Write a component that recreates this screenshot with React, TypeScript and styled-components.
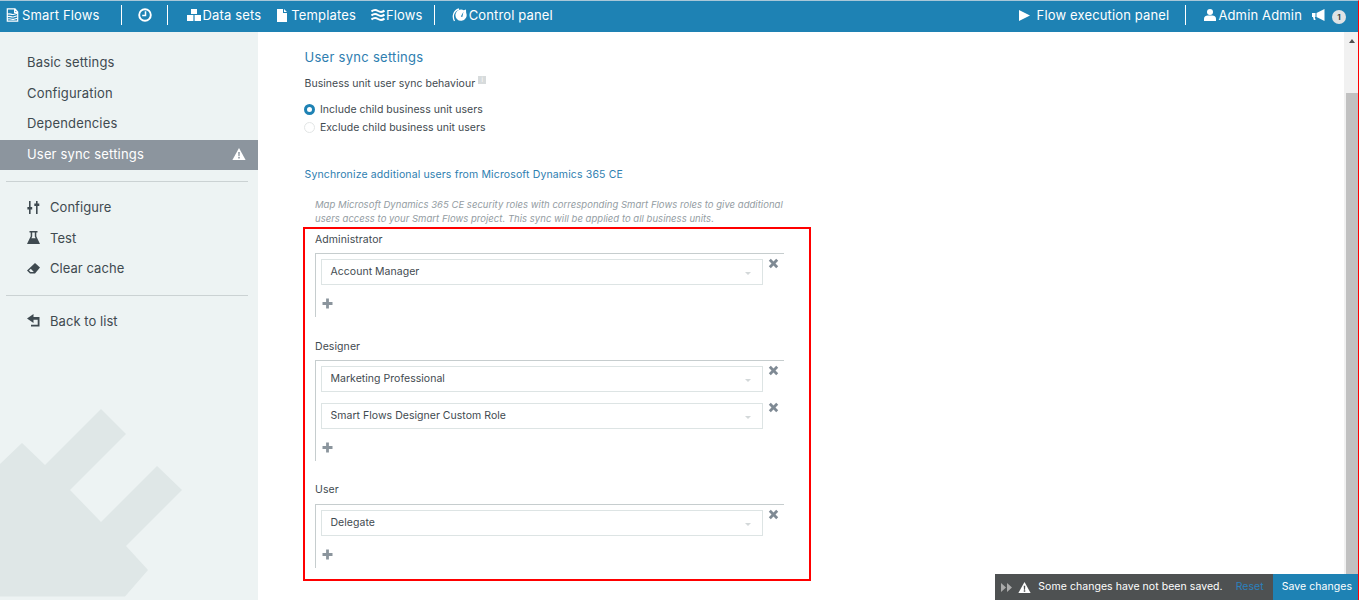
import React from 'react';
import styled, { createGlobalStyle } from 'styled-components';

const Global = createGlobalStyle`
  html, body { margin: 0; padding: 0; height: 100%; overflow: hidden; background: #fff; }
  body { font-family: Inter, "Liberation Sans", sans-serif; }
  #root { height: 100%; }
`;

const Page = styled.div`
  width: 1359px; height: 600px; display: flex; flex-direction: column; position: relative;
  border-right: 1px solid #f00; border-top: 1px solid #a9c7d8; box-sizing: border-box; overflow: hidden;
`;
const TopBar = styled.header`
  height: 31px; flex: none; background: #1e82b4; color: #fff; display: flex; align-items: center;
  font-size: 13px; letter-spacing: .15px; padding-bottom: 3px; box-sizing: border-box; white-space: nowrap;
`;
const NavItem = styled.span<{ $left: number; $gap?: number }>`
  display: inline-flex; align-items: center; gap: ${p => p.$gap ?? 2}px; margin-left: ${p => p.$left}px;
  svg { display: block; flex: none; }
`;
const Sep = styled.i<{ $left: number }>`
  display: block; width: 1px; height: 20px; background: #fff; margin-left: ${p => p.$left}px;
`;
const Spacer = styled.div` flex: 1; `;
const Badge = styled.b`
  width: 14px; height: 14px; border-radius: 50%; background: #dfe3e5; color: #444; font-size: 8px; font-weight: 700;
  display: flex; align-items: center; justify-content: center; margin: 4px 12px 0 7px;
`;
const Body = styled.div` flex: 1; display: flex; min-height: 0; `;
const Side = styled.aside`
  width: 258px; flex: none; background: #edf3f3; position: relative; overflow: hidden; padding-top: 15px; box-sizing: border-box;
`;
const SideLink = styled.div<{ $active?: boolean; $h?: number; $pb?: number }>`
  height: ${p => p.$h ?? 31}px; display: flex; align-items: center; padding: 0 12px ${p => p.$pb ?? 0}px 27px; font-size: 13px; letter-spacing: .17px;
  box-sizing: border-box; position: relative;
  color: ${p => (p.$active ? '#fff' : '#3f4a50')}; background: ${p => (p.$active ? '#8c959e' : 'transparent')};
  justify-content: space-between;
`;
const SideAction = styled.div`
  height: 30.5px; display: flex; align-items: center; gap: 10px; padding-left: 27px; font-size: 13px; letter-spacing: .05px; color: #3f4a50; position: relative;
  svg { width: 13px; height: 13px; flex: none; }
`;
const Rule = styled.hr<{ $top: number; $bottom: number }>`
  border: 0; height: 1px; background: #cbd2d3; margin: ${p => p.$top}px 10px ${p => p.$bottom}px 6px;
`;
const PlugArt = styled.svg`
  position: absolute; left: 0; bottom: 0; width: 258px; height: 210px;
`;
const Main = styled.main`
  flex: 1; position: relative; background: #fff; min-width: 0; display: flex;
`;
const Content = styled.div`
  flex: 1; padding: 17px 0 0 46px; color: #3f4a50; box-sizing: border-box; min-width: 0;
`;
const Title = styled.h2`
  margin: 0; font-size: 13px; line-height: 16px; font-weight: 400; letter-spacing: .28px; color: #2e7eb0; padding-left: .5px;
`;
const Label = styled.div`
  font-size: 10.5px; line-height: 14px; margin-top: 12px; color: #3f4a50; letter-spacing: .03px; display: flex; padding-left: .5px;
`;
const Info = styled.span`
  width: 8px; height: 8px; background: #d7dbdc; color: #fff; font-size: 6px; line-height: 8px; text-align: center; margin: -1px 0 0 3px;
`;
const Radios = styled.div` margin-top: 11px; display: flex; flex-direction: column; gap: 4px; `;
const RadioRow = styled.label`
  display: flex; align-items: center; gap: 5px; height: 14px; font-size: 10.5px; letter-spacing: .03px; color: #3f4a50;
`;
const RadioDot = styled.span<{ $on?: boolean }>`
  width: 11px; height: 11px; border-radius: 50%; box-sizing: border-box; background: #fff;
  border: ${p => (p.$on ? '3px solid #1e82b4' : '1px solid #e3e6e6')};
`;
const SubTitle = styled.h3`
  margin: 34px 0 0; font-size: 10.5px; line-height: 14px; font-weight: 400; color: #2e7eb0; letter-spacing: .14px; padding-left: .5px;
`;
const Mapping = styled.div` width: 480px; margin: 16px 0 0 11px; `;
const Help = styled.p`
  margin: 0; font-size: 9.5px; line-height: 14px; font-style: italic; color: #939ca2; letter-spacing: .03px; white-space: nowrap;
`;
const Group = styled.section<{ $top: number }>` margin-top: ${p => p.$top}px; `;
const GroupLabel = styled.div<{ $mb: number }>` font-size: 10.5px; line-height: 14px; color: #3f4a50; margin-bottom: ${p => p.$mb}px; letter-spacing: .08px; `;
const GroupBox = styled.div`
  width: 469px; border-top: 1px solid #c6cdce; border-left: 1px solid #c6cdce; padding: 5px 0 0 5px; box-sizing: border-box;
`;
const SelectRow = styled.div` display: flex; height: 26px; margin-bottom: 11px; `;
const SelectBox = styled.div`
  width: 442px; height: 26px; box-sizing: border-box; border: 1px solid #dde4e4; display: flex; align-items: center;
  justify-content: space-between; padding: 0 11px 2px 8.5px; font-size: 10.5px; letter-spacing: .03px; color: #3f4a50;
`;
const Caret = styled.i`
  width: 0; height: 0; border-left: 3px solid transparent; border-right: 3px solid transparent; border-top: 3px solid #d3d8d9; margin-top: 4px;
`;
const IconBtn = styled.span`
  display: block; margin: -1px 0 0 5px; svg { display: block; }
`;
const AddRow = styled.div` height: 21px; padding: 2px 0 0 1px; box-sizing: border-box; svg { display: block; } `;
const Scroll = styled.div`
  width: 14px; flex: none; background: #f1f1f1; position: relative;
`;
const Thumb = styled.div`
  position: absolute; left: 2px; right: 0; top: 61px; bottom: 0; background: #c1c1c1;
`;
const ScrollUp = styled.i`
  position: absolute; left: 5px; top: 7px; width: 0; height: 0; border-left: 3.5px solid transparent; border-right: 3.5px solid transparent; border-bottom: 4px solid #505050;
`;
const SaveBar = styled.div`
  position: absolute; right: 0; bottom: 0; height: 26px; display: flex; align-items: center; background: #4e5152; color: #fff; font-size: 10.5px; letter-spacing: .05px;
`;
const SaveMsg = styled.span`
  display: inline-flex; align-items: center; padding-left: 6px; white-space: nowrap; svg { display: block; flex: none; }
`;
const Skip = styled.svg` margin-right: 6px; `;
const SaveText = styled.span` margin: 0 0 2px 7px; `;
const ResetLink = styled.span` color: #2b80bd; margin: 0 9px 2px 13px; `;
const SaveBtn = styled.span` height: 26px; padding: 0 6px 2px 9px; box-sizing: border-box; background: #1e82b4; display: flex; align-items: center; `;
const RedFrame = styled.div`
  position: absolute; left: 303px; top: 226px; width: 508px; height: 354px; box-sizing: border-box; border: 2px solid #f00; pointer-events: none;
`;

const X = () => (
  <svg width="11" height="11" viewBox="0 0 11 11"><path d="M2.800.8L5.500 3.500 8.200.8 10.200 2.800 7.500 5.500 10.200 8.200 8.200 10.200 5.500 7.500 2.800 10.200.8 8.200 3.500 5.500.8 2.800z" fill="#7f8a94"/></svg>
);
const Plus = () => (
  <svg width="11" height="11" viewBox="0 0 11 11"><path d="M4.100 .5h2.800v3.600h3.600v2.800H6.900v3.600H4.100V6.900H.5V4.100h3.600z" fill="#8b959d"/></svg>
);
const Warn = ({ s = 14, inner = '#8c959e' }: { s?: number; inner?: string }) => (
  <svg width={s} height={s} viewBox="0 0 14 14"><path d="M7 1l6.600 12H.4z" fill="#fff"/><path d="M6.200 5h1.600l-.2 4.300H6.400zM6.200 10h1.600v1.600H6.200z" fill={inner}/></svg>
);

const roles = [
  { name: 'Administrator', items: ['Account Manager'], top: 7, mb: 6 },
  { name: 'Designer', items: ['Marketing Professional', 'Smart Flows Designer Custom Role'], top: 23, mb: 6 },
  { name: 'User', items: ['Delegate'], top: 22, mb: 7 },
];

export default function App() {
  return (
    <Page>
      <Global />
      <TopBar>
        <NavItem $left={6} $gap={3}>
          <svg width="13" height="14" viewBox="0 0 13 14" fill="none" stroke="#fff" strokeWidth="1.200"><path d="M9 .8H1.300v12.400h10.400V4zM8.600 1v3.400h3"/><path d="M1 6.300c3-1.600 4 1 7 0l3.400-1M1 8.800c3-1.600 4 1 7 0l3.400-1M1 11.200c3-1.600 4 1 7 0l3.400-1" strokeWidth="1.100"/></svg>
          Smart Flows
        </NavItem>
        <Sep $left={21} />
        <NavItem $left={16}>
          <svg width="14" height="14" viewBox="0 0 14 14" fill="none" stroke="#fff"><circle cx="7" cy="7" r="5.800" strokeWidth="1.900"/><path d="M7.500 3.200v4.300H4.200" strokeWidth="1.500"/></svg>
        </NavItem>
        <Sep $left={15} />
        <NavItem $left={19}>
          <svg width="14" height="12" viewBox="0 0 14 12" fill="#fff"><path d="M4 0h6v5H4zM0 6h6.400v6H0zM7.600 6H14v6H7.600z"/></svg>
          Data sets
        </NavItem>
        <NavItem $left={16} $gap={4}>
          <svg width="10" height="13" viewBox="0 0 10 13" fill="#fff"><path d="M0 0h6v4h4v9H0zM7 0l3 3H7z"/></svg>
          Templates
        </NavItem>
        <NavItem $left={15} $gap={1}>
          <svg width="14" height="12" viewBox="0 0 14 12" fill="none" stroke="#fff" strokeWidth="2"><path d="M.5 2.500C3 .5 5 .8 7 2s4 1.500 6.500-.5M.5 6.500C3 4.500 5 4.800 7 6s4 1.500 6.500-.5M.5 10.500C3 8.500 5 8.800 7 10s4 1.500 6.500-.5"/></svg>
          Flows
        </NavItem>
        <Sep $left={11} />
        <NavItem $left={17} $gap={2}>
          <svg width="15" height="14" viewBox="0 0 15 14"><path d="M2.500 13C0 8.500 1.500 2.500 7 1" fill="none" stroke="#fff" strokeWidth="1.300"/><path d="M14 1.500l-2.200.8a5.600 5.600 0 1 0 2.400 2.700zM8.800 8.500l2.700-4.700-1.200 5.200z" fill="#fff" fillRule="evenodd"/></svg>
          Control panel
        </NavItem>
        <Spacer />
        <NavItem $left={0} $gap={7}>
          <svg width="11" height="11" viewBox="0 0 11 11" fill="#fff"><path d="M0 0l11 5.500L0 11z"/></svg>
          Flow execution panel
        </NavItem>
        <Sep $left={16} />
        <NavItem $left={18}>
          <svg width="12" height="12" viewBox="0 0 12 12" fill="#fff"><circle cx="6" cy="3" r="3"/><path d="M0 12V9.500C0 7.500 2 6.500 3.500 6.500h5C10 6.500 12 7.500 12 9.500V12z"/></svg>
          Admin Admin
        </NavItem>
        <NavItem $left={10}>
          <svg width="13" height="12" viewBox="0 0 13 12" fill="#fff"><path d="M0 4h3.500v4H2.800l.8 3H1.800L1 8H0zM4.500 4L12.500 0v12L4.500 8z"/></svg>
        </NavItem>
        <Badge>1</Badge>
      </TopBar>
      <Body>
        <Side>
          <SideLink $pb={1}>Basic settings</SideLink>
          <SideLink $pb={1}>Configuration</SideLink>
          <SideLink $pb={3}>Dependencies</SideLink>
          <SideLink $active $h={30} $pb={2}>User sync settings<Warn /></SideLink>
          <Rule $top={11} $bottom={10} />
          <SideAction>
            <svg viewBox="0 0 13 13" fill="#3f4a50"><path d="M2 0h1.600v6H5.200v2.400H3.600V13H2V8.400H.4V6H2zM9 0h1.600v2.500h1.700V5h-1.700v8H9V5H7.300V2.500H9z"/></svg>
            Configure
          </SideAction>
          <SideAction>
            <svg viewBox="0 0 13 13" fill="#3f4a50"><path d="M2.500 0h8v1.500H9.300v3.700L13 13H0l3.700-7.800V1.500H2.500zM5.200 1.500v4L4.400 7.200h4.200L7.800 5.500v-4z" fillRule="evenodd"/></svg>
            Test
          </SideAction>
          <SideAction>
            <svg viewBox="0 0 13 13"><path d="M8 1L13 5.500 8 11.500H3L0 8.500z" fill="#3f4a50"/><path d="M2 8.400L3.800 6.700 6.800 10H3.600z" fill="#edf3f3"/></svg>
            Clear cache
          </SideAction>
          <Rule $top={11} $bottom={10} />
          <SideAction>
            <svg viewBox="0 0 13 13" fill="#3f4a50"><path d="M0 4.500L6.500 0v3H12.500v9.500H4V10.800h6.700V5.800H6.500V9z"/></svg>
            Back to list
          </SideAction>
          <PlugArt viewBox="0 0 258 210" fill="#dfe7e7">
            <path d="M0 74L22 53 45 75 101 19 126 44 70 100 101 132 157 76 182 100 126 156 148 180 125 206.500H0z"/>
          </PlugArt>
        </Side>
        <Main>
          <Content>
            <Title>User sync settings</Title>
            <Label>Business unit user sync behaviour<Info>i</Info></Label>
            <Radios>
              <RadioRow><RadioDot $on />Include child business unit users</RadioRow>
              <RadioRow><RadioDot />Exclude child business unit users</RadioRow>
            </Radios>
            <SubTitle>Synchronize additional users from Microsoft Dynamics 365 CE</SubTitle>
            <Mapping>
              <Help>Map Microsoft Dynamics 365 CE security roles with corresponding Smart Flows roles to give additional<br />users access to your Smart Flows project. This sync will be applied to all business units.</Help>
              {roles.map(r => (
                <Group key={r.name} $top={r.top}>
                  <GroupLabel $mb={r.mb}>{r.name}</GroupLabel>
                  <GroupBox>
                    {r.items.map(i => (
                      <SelectRow key={i}>
                        <SelectBox>{i}<Caret /></SelectBox>
                        <IconBtn><X /></IconBtn>
                      </SelectRow>
                    ))}
                    <AddRow><Plus /></AddRow>
                  </GroupBox>
                </Group>
              ))}
            </Mapping>
          </Content>
          <Scroll><ScrollUp /><Thumb /></Scroll>
          <SaveBar>
            <SaveMsg>
              <Skip width="11" height="9" viewBox="0 0 11 9" fill="#aaa"><path d="M0 0l5 4.500L0 9zM6 0l5 4.500L6 9z"/></Skip>
              <Warn s={13} inner="#4e5152" />
              <SaveText>Some changes have not been saved.</SaveText>
            </SaveMsg>
            <ResetLink>Reset</ResetLink>
            <SaveBtn>Save changes</SaveBtn>
          </SaveBar>
        </Main>
      </Body>
      <RedFrame />
    </Page>
  );
}
